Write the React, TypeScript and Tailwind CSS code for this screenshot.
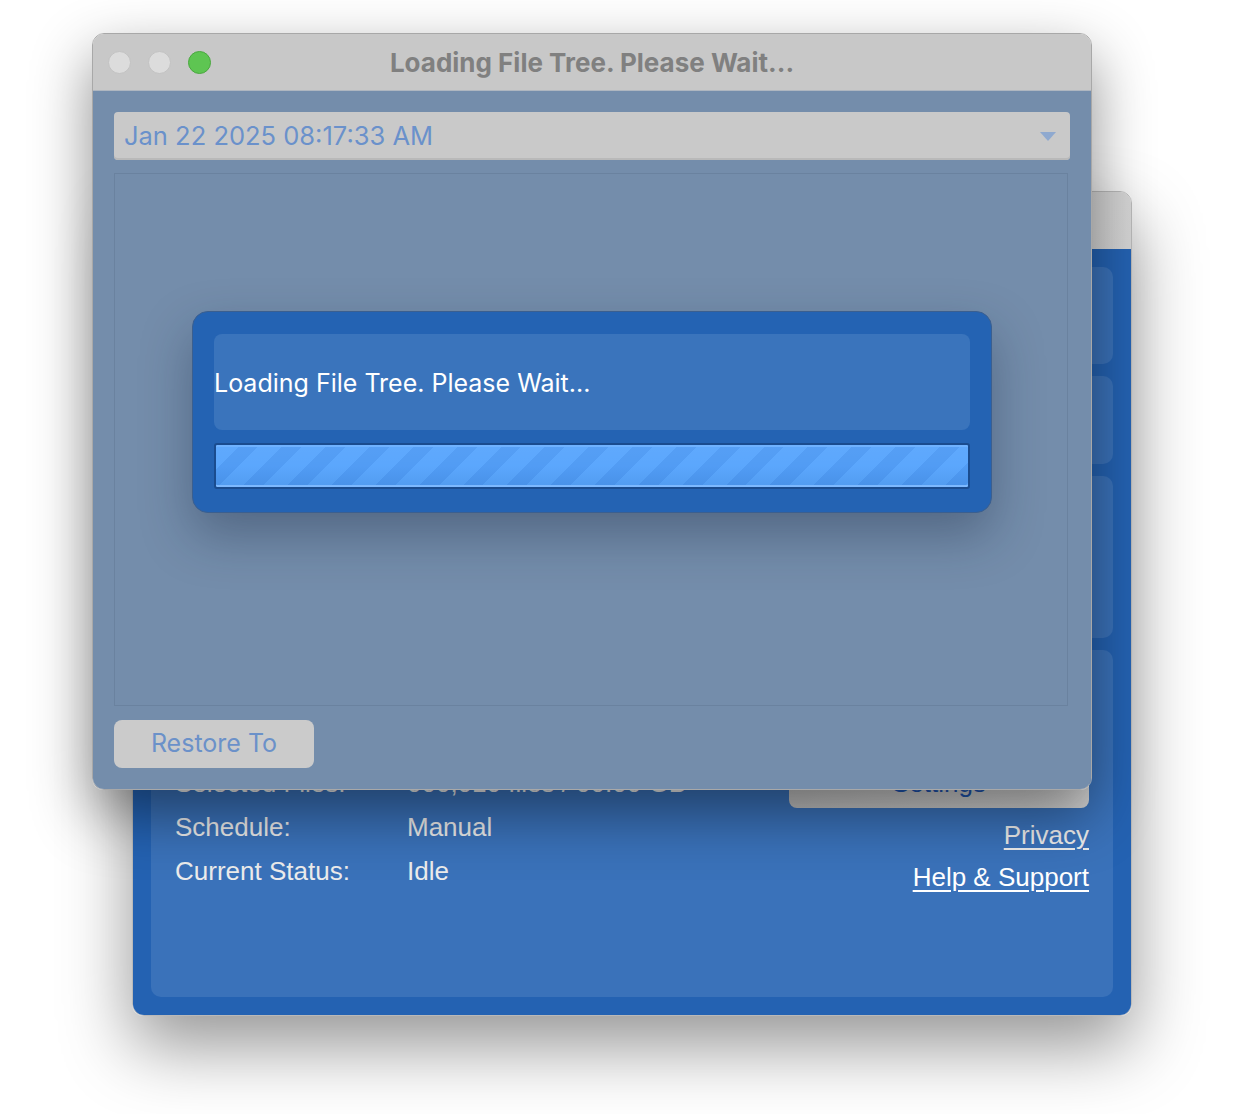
import React from "react";

const sans = "font-['Inter','Noto_Sans',sans-serif]";
const arial = "font-['Liberation_Sans','Arial',sans-serif]";

const InfoRow = ({ label, value }: { label: string; value: string }) => (
  <div className="flex h-[44px] items-center">
    <span className="w-[232px]">{label}</span>
    <span>{value}</span>
  </div>
);

const BackWindow = () => {
  return (
    <div className="absolute left-[132px] top-[191px] flex h-[825px] w-[1000px] flex-col overflow-hidden rounded-[12px] border border-[#b9b9b9] shadow-[0_30px_70px_rgba(0,0,0,0.42)]">
      <div className="h-[57px] shrink-0 bg-[linear-gradient(135deg,#e4e4e4,#d4d4d4)]" />
      <div className="flex flex-1 flex-col gap-3 bg-[#2462b2] p-[18px]">
        <div className="h-[97px] rounded-[10px] bg-white/10" />
        <div className="h-[88px] rounded-[10px] bg-white/10" />
        <div className="h-[162px] rounded-[10px] bg-white/10" />
        <div
          className={`flex flex-1 justify-between rounded-[10px] bg-white/10 px-[24px] text-[26px] text-[#ececec] ${arial}`}
        >
          <div className="pt-[111px]">
            <InfoRow label="Selected Files:" value="000,010 files / 00.00 GB" />
            <InfoRow label="Schedule:" value="Manual" />
            <InfoRow label="Current Status:" value="Idle" />
          </div>
          <div className="flex w-[300px] flex-col items-end pt-[109px]">
            <div className="flex h-[49px] w-full items-center justify-center rounded-[8px] bg-[linear-gradient(135deg,#bdbdbd,#d6d6d6)] text-[#1f55b0]">
              Settings
            </div>
            <a className="mt-[12px] leading-[30px] underline decoration-2 underline-offset-[4px]">
              Privacy
            </a>
            <a className="mt-[12px] leading-[30px] text-white underline decoration-2 underline-offset-[4px]">
              Help &amp; Support
            </a>
          </div>
        </div>
      </div>
    </div>
  );
};

const LoadingSheet = () => {
  return (
    <div className="absolute left-[99px] top-[220px] flex h-[202px] w-[800px] flex-col rounded-[16px] border border-[#3b5f8f] bg-[#2463b3] px-[21px] pt-[22px] shadow-[0_22px_50px_rgba(20,35,60,0.35)]">
      <div className="flex h-[96px] items-center rounded-[8px] bg-[#3a74bc] pt-[3px] text-[25px] text-white">
        Loading File Tree. Please Wait...
      </div>
      <div className="mt-[13px] h-[46px] rounded-[3px] border-2 border-[#1a4c8f] bg-[linear-gradient(180deg,rgba(255,255,255,0.06),rgba(255,255,255,0.03)_50%,rgba(0,0,0,0.05)),repeating-linear-gradient(135deg,#56a4fd_0px,#56a4fd_17px,#4c99f4_17px,#4c99f4_31px)] shadow-[inset_0_-2px_0_#7db9ff,inset_0_2px_0_#6fb2ff]" />
    </div>
  );
};

const FrontWindow = () => {
  return (
    <div
      className={`absolute left-[92px] top-[33px] flex h-[757px] w-[1000px] flex-col overflow-hidden rounded-[12px] border border-[#a8a8a8] shadow-[0_24px_60px_rgba(0,0,0,0.45)] ${sans}`}
    >
      <div className="grid h-[57px] shrink-0 grid-cols-[1fr_auto_1fr] items-center border-b border-[#aeb6c0] bg-[#c8c8c8]">
        <div className="flex items-center gap-[17px] pl-[15px]">
          <span className="h-[23px] w-[23px] rounded-full border border-[#c2c2c2] bg-[#dcdcdc]" />
          <span className="h-[23px] w-[23px] rounded-full border border-[#c2c2c2] bg-[#dcdcdc]" />
          <span className="h-[23px] w-[23px] rounded-full border border-[#4aa83f] bg-[#5ec552]" />
        </div>
        <div className="text-[26px] font-bold text-[#808080]">Loading File Tree. Please Wait...</div>
        <div />
      </div>
      <div className="relative flex flex-1 flex-col bg-[#748dab] p-[21px]">
        <div className="flex h-[48px] items-center justify-between rounded-[4px] bg-[#c9c9c9] pl-[10px] pr-[14px] text-[25.5px] text-[#6a91cb] shadow-[inset_0_-2px_0_#b9b9b9]">
          <span>Jan 22 2025 08:17:33 AM</span>
          <svg width="16" height="9" viewBox="0 0 16 9">
            <path d="M0 0 L16 0 L8 9 Z" fill="#8fa9cf" />
          </svg>
        </div>
        <div className="mt-[13px] mr-[2px] flex-1 border border-[#6a829f]" />
        <div className="mt-[14px] flex h-[48px] w-[200px] items-center justify-center rounded-[8px] bg-[#cbcbcb] text-[25px] text-[#6b91c9]">
          Restore To
        </div>
        <LoadingSheet />
      </div>
    </div>
  );
};

export default function App() {
  return (
    <div className="relative h-[1114px] w-[1248px] overflow-hidden bg-white">
      <BackWindow />
      <FrontWindow />
    </div>
  );
}
